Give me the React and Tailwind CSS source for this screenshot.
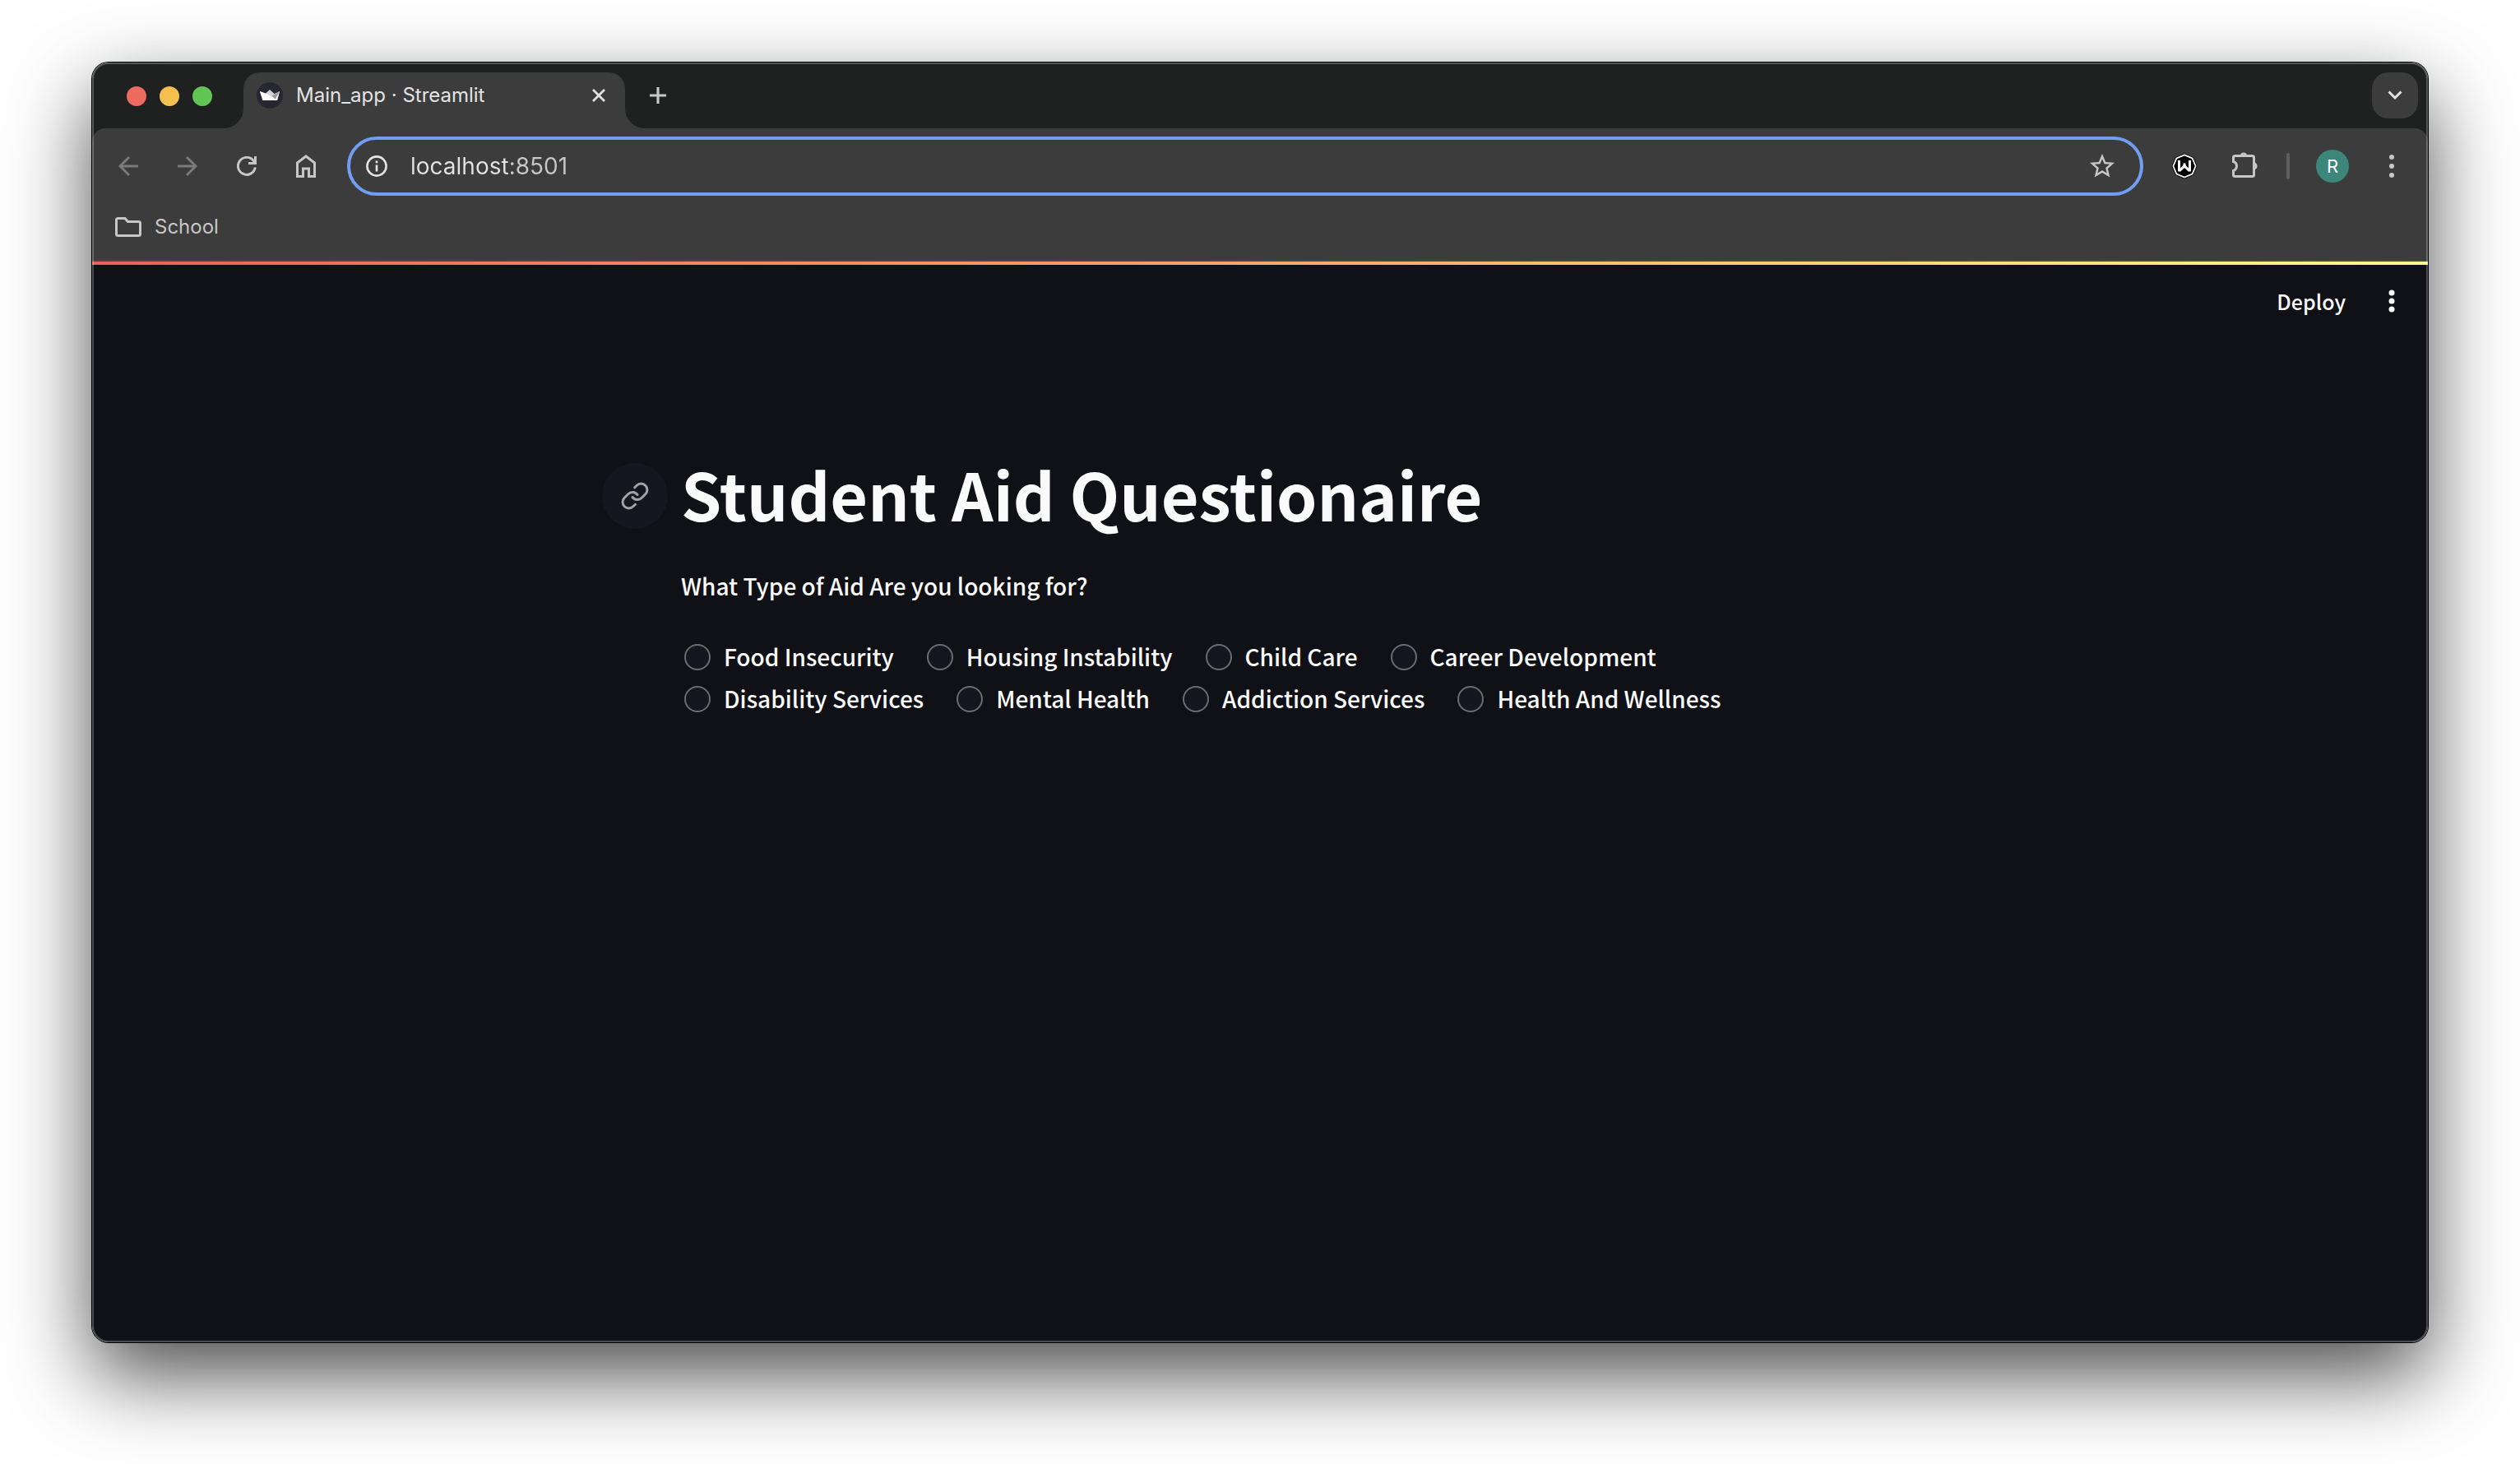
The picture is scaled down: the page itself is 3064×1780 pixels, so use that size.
const options = [
  'Food Insecurity',
  'Housing Instability',
  'Child Care',
  'Career Development',
  'Disability Services',
  'Mental Health',
  'Addiction Services',
  'Health And Wellness',
];

const Favicon = () => (
  <svg viewBox="0 0 32 32" className="size-8 shrink-0" aria-hidden="true">
    <circle cx="16" cy="16" r="16" fill="#262730" />
    <path d="M4 11L10.5 14L16 9L21.5 14L28 11L25 22H7.5Z" fill="#d2d2d4" />
    <path d="M4 11L13.5 14.5L25 22H7.5Z" fill="#fff" />
    <path d="M28 11L18.5 16.5L25 22Z" fill="#98989d" />
    <path d="M28 11L25 22L23 20Z" fill="#f0f0f0" />
    <path d="M7.2 20.6H25.2L25 22H7.6Z" fill="#fff" />
  </svg>
);

function NavButton({ label, dim, children }) {
  return (
    <button
      type="button"
      aria-label={label}
      className={`flex size-18 items-center justify-center ${dim ? 'text-[#7b7b7b]' : 'text-[#c7c7c7]'}`}
    >
      {children}
    </button>
  );
}

function TabStrip() {
  return (
    <div className="flex h-20 items-end bg-[#1f2020]">
      <div className="flex items-center gap-4 self-center pt-[2px] pl-[42px]">
        <button type="button" aria-label="Close window" className="size-6 rounded-full bg-[#ed6a5f]" />
        <button type="button" aria-label="Minimize window" className="size-6 rounded-full bg-[#f5bf4f]" />
        <button type="button" aria-label="Zoom window" className="size-6 rounded-full bg-[#61c554]" />
      </div>
      <svg viewBox="0 0 24 24" className="ml-[14px] size-6 shrink-0 text-[#3c3c3c]" aria-hidden="true">
        <path d="M24 0A24 24 0 0 1 0 24H24Z" fill="currentColor" />
      </svg>
      <div className="flex h-17 w-[464px] items-center rounded-t-[20px] bg-[#3c3c3c] pr-6 pb-3 pl-4">
        <Favicon />
        <span className="ml-4 flex-1 truncate text-2xl text-[#e3e3e3]">Main_app · Streamlit</span>
        <button type="button" aria-label="Close tab" className="text-[#e3e3e3]">
          <svg viewBox="0 0 16 16" className="size-4" fill="none" stroke="currentColor" strokeWidth="2.8">
            <path d="M1 1L15 15M15 1L1 15" />
          </svg>
        </button>
      </div>
      <svg viewBox="0 0 24 24" className="size-6 shrink-0 text-[#3c3c3c]" aria-hidden="true">
        <path d="M0 0A24 24 0 0 0 24 24H0Z" fill="currentColor" />
      </svg>
      <button type="button" aria-label="New tab" className="mb-[30px] ml-[6px] text-[#c7c7c7]">
        <svg viewBox="0 0 20 20" className="size-5" fill="none" stroke="currentColor" strokeWidth="3.2">
          <path d="M10 0V20M0 10H20" />
        </svg>
      </button>
      <button
        type="button"
        aria-label="Search tabs"
        className="mr-3 mb-3 ml-auto flex size-14 items-center justify-center rounded-[20px] bg-[#3c3c3c] text-[#e3e3e3]"
      >
        <svg viewBox="0 0 18 12" className="h-3 w-[18px]" fill="none" stroke="currentColor" strokeWidth="3">
          <path d="M1.5 1.5L9 9L16.5 1.5" />
        </svg>
      </button>
    </div>
  );
}

function Toolbar() {
  return (
    <div className="bg-[#1f2020]">
      <div className="flex items-center rounded-t-2xl bg-[#3c3c3c] pt-[10px] pl-2">
        <NavButton label="Back" dim>
          <svg viewBox="0 0 24 24" className="size-6" fill="none" stroke="currentColor" strokeWidth="3">
            <path d="M24 12H2M13 1L2 12L13 23" />
          </svg>
        </NavButton>
        <NavButton label="Forward" dim>
          <svg viewBox="0 0 24 24" className="size-6" fill="none" stroke="currentColor" strokeWidth="3">
            <path d="M0 12H22M11 1L22 12L11 23" />
          </svg>
        </NavButton>
        <NavButton label="Reload">
          <svg viewBox="0 0 24 24" className="size-6" fill="none" stroke="currentColor" strokeWidth="3">
            <path d="M22.3 13.5A10.5 10.5 0 1 1 20.5 5.8L22.5 8M22.5 0V8.5H14" />
          </svg>
        </NavButton>
        <NavButton label="Home">
          <svg viewBox="0 0 24 28" className="h-7 w-6" fill="none" stroke="currentColor" strokeWidth="3">
            <path d="M1.5 10L12 2L22.5 10V26.5H15.5V17H8.5V26.5H1.5Z" />
          </svg>
        </NavButton>

        <div className="ml-[14px] flex h-18 flex-1 items-center rounded-full border-4 border-[#719df2] pr-7 pl-[19px]">
          <button type="button" aria-label="View site information" className="text-[#e3e3e3]">
            <svg viewBox="0 0 26 26" className="size-[26px]" fill="none" stroke="currentColor" strokeWidth="2.6">
              <circle cx="13" cy="13" r="11.6" />
              <path d="M13 11.5V19.5M13 6.5V9.2" />
            </svg>
          </button>
          <input
            type="text"
            aria-label="Address and search bar"
            defaultValue="localhost:8501"
            className="ml-7 min-w-0 flex-1 bg-[linear-gradient(90deg,#e3e3e3_120px,#c7c7c7_120px)] bg-clip-text text-[28px] leading-9 text-transparent outline-none"
          />
          <button type="button" aria-label="Bookmark this tab" className="text-[#c7c7c7]">
            <svg viewBox="0 0 24 24" className="size-9" fill="currentColor">
              <path d="M22 9.24l-7.19-.62L12 2 9.19 8.63 2 9.24l5.46 4.73L5.82 21 12 17.27 18.18 21l-1.63-7.03L22 9.24zM12 15.4l-3.76 2.27 1-4.28-3.32-2.88 4.38-.38L12 6.1l1.71 4.04 4.38.38-3.32 2.88 1 4.28L12 15.4z" />
            </svg>
          </button>
        </div>

        <div className="flex items-center pr-10 pl-[34px]">
          <button type="button" aria-label="Extension">
            <svg viewBox="0 0 32 32" className="size-8">
              <path d="M16 0.5L26.8 5L31.5 16L26.8 27L16 31.5L5.2 27L0.5 16L5.2 5Z" fill="#000" />
              <path d="M16 2.4L25.6 6.4L29.6 16L25.6 25.6L16 29.6L6.4 25.6L2.4 16L6.4 6.4Z" fill="none" stroke="#fff" strokeWidth="1.7" />
              <path d="M8 9H11V18.6L14.5 14.8V12.5H17.5V14.8L21 18.6V9H24V22.5H20.6L16 18L11.4 22.5H8Z" fill="#fff" />
            </svg>
          </button>
          <button type="button" aria-label="Extensions" className="ml-[42px] text-[#c7c7c7]">
            <svg viewBox="0 0 32 36" className="h-9 w-8">
              <path
                d="M3.5 5.5H24.5Q26.5 5.5 26.5 7.5V28.5Q26.5 30.5 24.5 30.5H3.5Q1.5 30.5 1.5 28.5V23.5A5.8 5.8 0 0 0 1.5 12.5V7.5Q1.5 5.5 3.5 5.5Z"
                fill="none"
                stroke="currentColor"
                strokeWidth="3"
              />
              <path d="M9.8 4.5A4.4 4.4 0 0 1 18.2 4.5ZM27.5 13.8A4.4 4.4 0 0 1 27.5 22.2Z" fill="currentColor" />
            </svg>
          </button>
          <div className="ml-[34px] h-8 w-1 rounded-full bg-[#5f5f5f]" />
          <button
            type="button"
            aria-label="Profile"
            className="ml-8 flex size-10 items-center justify-center rounded-full bg-[#3c877a] text-[22px] leading-none text-white"
          >
            R
          </button>
          <button type="button" aria-label="Browser menu" className="ml-12 text-[#c7c7c7]">
            <svg viewBox="0 0 8 28" className="h-7 w-2" fill="currentColor">
              <circle cx="4" cy="3" r="3" />
              <circle cx="4" cy="14" r="3" />
              <circle cx="4" cy="25" r="3" />
            </svg>
          </button>
        </div>
      </div>

      <div className="flex h-20 items-center border-b-2 border-[#474747] bg-[#3c3c3c] pb-[2px] pl-7">
        <button type="button" className="flex items-center gap-4 text-2xl text-[#c7c7c7]">
          <svg viewBox="0 0 32 24" className="h-6 w-8" fill="none" stroke="currentColor" strokeWidth="3" aria-hidden="true">
            <path d="M3.5 1.5H12L15.5 5.5H28.5Q30.5 5.5 30.5 7.5V20.5Q30.5 22.5 28.5 22.5H3.5Q1.5 22.5 1.5 20.5V3.5Q1.5 1.5 3.5 1.5Z" />
          </svg>
          School
        </button>
      </div>
    </div>
  );
}

function Page() {
  return (
    <div className="flex flex-1 flex-col bg-[#101116] font-['Noto_Sans_CJK_JP','Noto_Sans_CJK_SC',sans-serif] text-[#fafafa]">
      <div className="h-1 bg-linear-to-r from-[#ed6058] via-[#f4a76c] to-[#fffb8c]" />
      <header className="flex h-[88px] items-center justify-end pr-10">
        <button type="button" className="text-[25px] leading-10 font-medium">
          Deploy
        </button>
        <button type="button" aria-label="Main menu" className="ml-[52px]">
          <svg viewBox="0 0 8 28" className="h-7 w-2" fill="currentColor">
            <circle cx="4" cy="4" r="3.5" />
            <circle cx="4" cy="14" r="3.5" />
            <circle cx="4" cy="24" r="3.5" />
          </svg>
        </button>
      </header>

      <main className="mx-auto w-full max-w-[1408px] pt-[140px]">
        <div className="-ml-24 flex items-center gap-4">
          <a
            href="#student-aid-questionaire"
            aria-label="Link to heading"
            className="flex size-20 items-center justify-center rounded-full bg-[#141720] text-[#a3a3a6]"
          >
            <svg
              viewBox="0 0 24 24"
              className="size-9"
              fill="none"
              stroke="currentColor"
              strokeWidth="2"
              strokeLinecap="round"
              strokeLinejoin="round"
            >
              <path d="M10 13a5 5 0 0 0 7.54.54l3-3a5 5 0 0 0-7.07-7.07l-1.72 1.71" />
              <path d="M14 11a5 5 0 0 0-7.54-.54l-3 3a5 5 0 0 0 7.07 7.07l1.71-1.71" />
            </svg>
          </a>
          <h1 id="student-aid-questionaire" className="pb-[6px] text-[79px] leading-[100px] font-bold">
            Student Aid Questionaire
          </h1>
        </div>

        <fieldset>
          <legend className="pt-[30px] text-[28px] leading-[52px] font-medium">
            What Type of Aid Are you looking for?
          </legend>
          <div className="mt-[35px] flex flex-wrap gap-x-9">
            {options.map((name) => (
              <label key={name} className="flex items-center gap-4 pl-1 text-[28px] leading-[51px] font-medium">
                <input
                  type="radio"
                  name="aid"
                  value={name}
                  className="size-8 shrink-0 appearance-none rounded-full border-2 border-[#6b6c70] bg-[#141720] checked:border-8 checked:border-[#ed6058]"
                />
                {name}
              </label>
            ))}
          </div>
        </fieldset>
      </main>
    </div>
  );
}

export default function App() {
  return (
    <div className="flex min-h-screen flex-col bg-white px-28 pt-19 pb-[148px] font-[Inter,'Liberation_Sans',sans-serif]">
      <div className="relative flex flex-1 flex-col rounded-[20px] shadow-[0_0_0_1px_#000,0_40px_100px_rgba(0,0,0,0.7)]">
        <div className="flex flex-1 flex-col overflow-hidden rounded-[20px]">
          <TabStrip />
          <Toolbar />
          <Page />
        </div>
        <div className="pointer-events-none absolute inset-0 rounded-[20px] border-2 border-white/25" />
      </div>
    </div>
  );
}
